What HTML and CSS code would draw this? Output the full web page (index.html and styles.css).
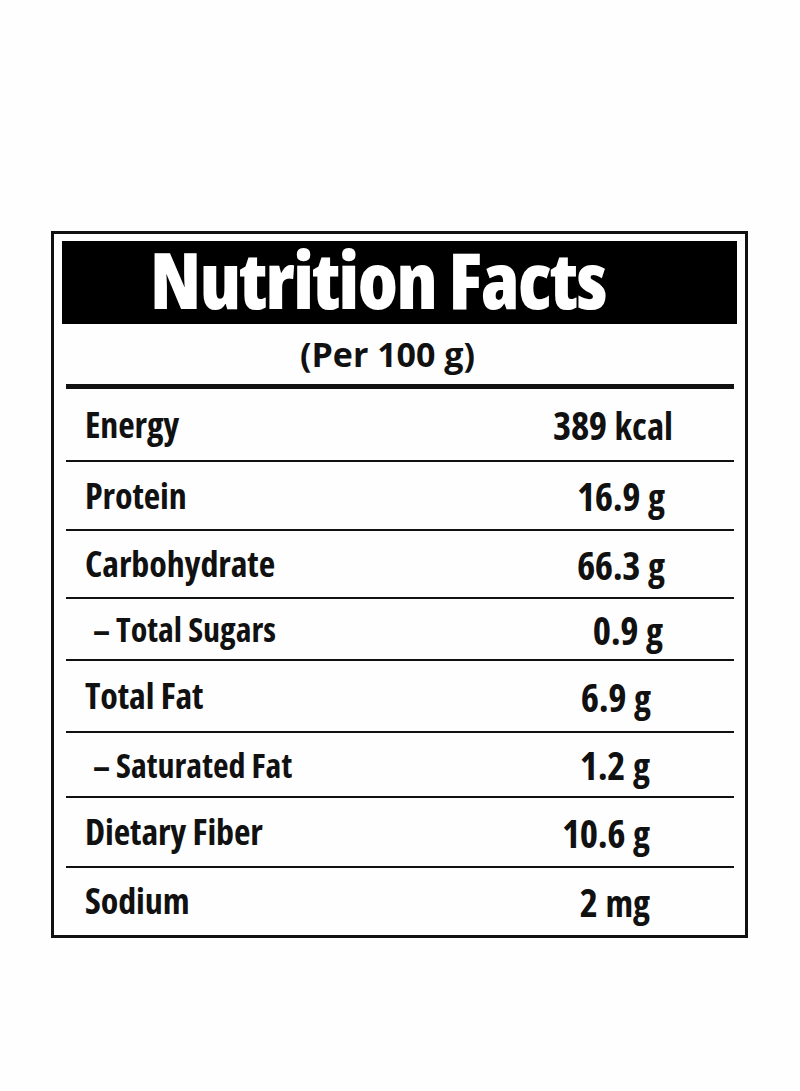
FILE: index.html
```html
<!DOCTYPE html>
<html lang="en">
<head>
<meta charset="utf-8">
<title>Nutrition Facts</title>
<link rel="stylesheet" href="styles.css">
</head>
<body>
<main class="page">
  <section class="label">
    <header class="label-head">
      <h1 class="title">Nutrition Facts</h1>
    </header>
    <p class="serving">(Per 100 g)</p>
    <div class="facts">
      <div class="row"><span class="name">Energy</span><span class="val"><span class="num">389</span> <span class="unit">kcal</span></span></div>
      <div class="row"><span class="name">Protein</span><span class="val"><span class="num">16.9</span> <span class="unit">g</span></span></div>
      <div class="row"><span class="name">Carbohydrate</span><span class="val"><span class="num">66.3</span> <span class="unit">g</span></span></div>
      <div class="row sub"><span class="name">– Total Sugars</span><span class="val"><span class="num">0.9</span> <span class="unit">g</span></span></div>
      <div class="row"><span class="name">Total Fat</span><span class="val"><span class="num">6.9</span> <span class="unit">g</span></span></div>
      <div class="row sub"><span class="name">– Saturated Fat</span><span class="val"><span class="num">1.2</span> <span class="unit">g</span></span></div>
      <div class="row"><span class="name">Dietary Fiber</span><span class="val"><span class="num">10.6</span> <span class="unit">g</span></span></div>
      <div class="row"><span class="name">Sodium</span><span class="val"><span class="num">2</span> <span class="unit">mg</span></span></div>
    </div>
  </section>
</main>
</body>
</html>
```
FILE: styles.css
```css
* { box-sizing: border-box; }

html, body {
  margin: 0;
  padding: 0;
  background: #fefefe;
}

body {
  font-family: "Open Sans", "Liberation Sans", sans-serif;
  font-stretch: 75%;
  font-weight: 700;
  color: #111;
}

.page {
  padding: 231px 52px 0 51px;
  height: 1091px;
}

.label {
  width: 697px;
  height: 707px;
  border: 3px solid #111;
  display: flex;
  flex-direction: column;
}

.label-head {
  margin: 7px 8px 0 8px;
  height: 83px;
  background: #000;
}

.title {
  margin: 0;
  padding-left: 88px;
  font-size: 78px;
  font-weight: 800;
  line-height: 77px;
  letter-spacing: -1.5px;
  color: #fff;
}

.serving {
  margin: 0;
  height: 60px;
  padding-right: 24px;
  text-align: center;
  font-size: 34px;
  font-stretch: 92%;
  font-weight: 700;
  line-height: 60px;
}

.facts {
  margin: 0 11px 0 12px;
  border-top: 5px solid #111;
  display: flex;
  flex-direction: column;
}

.row {
  display: flex;
  align-items: center;
  justify-content: space-between;
  border-top: 2px solid #111;
  padding-left: 19px;
}

.row:first-child { border-top: 0; height: 71px; padding-right: 61px; }
.row:nth-child(2) { height: 69px; padding-right: 69px; }
.row:nth-child(3) { height: 68px; padding-right: 69px; }
.row:nth-child(4) { height: 62px; padding-right: 71px; }
.row:nth-child(5) { height: 72px; padding-right: 83px; }
.row:nth-child(6) { height: 65px; padding-right: 84px; }
.row:nth-child(7) { height: 70px; padding-right: 84px; }
.row:nth-child(8) { height: 68px; padding-right: 84px; }

.row.sub { padding-left: 27px; }

.name {
  font-size: 36px;
  font-stretch: 80%;
  letter-spacing: -0.1px;
  line-height: 1;
}

.row.sub .name {
  font-size: 34px;
  font-stretch: 82%;
  letter-spacing: 0;
}

.val {
  line-height: 1;
  white-space: nowrap;
  word-spacing: 5px;
}

.num {
  font-size: 39px;
  font-stretch: 80%;
  letter-spacing: -0.4px;
}

.unit {
  font-size: 37px;
  font-stretch: 86%;
  font-weight: 700;
}
```
